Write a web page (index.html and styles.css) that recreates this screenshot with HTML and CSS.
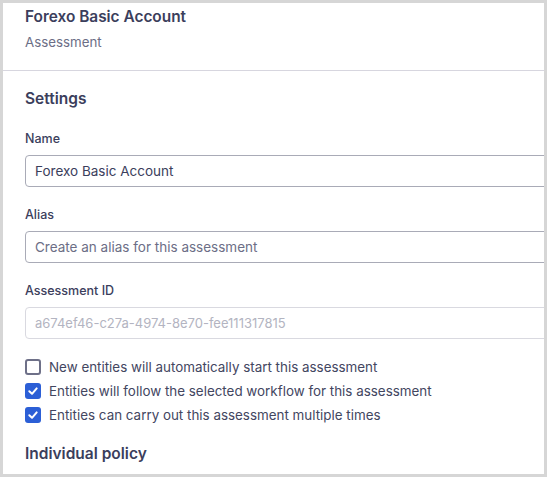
FILE: index.html
```html
<!DOCTYPE html>
<html>
<head>
<meta charset="utf-8">
<link rel="stylesheet" href="styles.css">
</head>
<body>
<div class="frame">
  <header class="head">
    <div class="title">Forexo Basic Account</div>
    <div class="subtitle">Assessment</div>
  </header>
  <section class="content">
    <h2 class="section-title">Settings</h2>
    <div class="field">
      <label class="label">Name</label>
      <div class="input">Forexo Basic Account</div>
    </div>
    <div class="field">
      <label class="label">Alias</label>
      <div class="input placeholder">Create an alias for this assessment</div>
    </div>
    <div class="field">
      <label class="label">Assessment ID</label>
      <div class="input disabled">a674ef46-c27a-4974-8e70-fee111317815</div>
    </div>
    <div class="checks">
      <div class="check-row"><span class="box"></span><span>New entities will automatically start this assessment</span></div>
      <div class="check-row"><span class="box checked"><svg viewBox="0 0 16 16" width="16" height="16"><path d="M4.3 8.3 L7 10.8 L11.7 5.4" fill="none" stroke="#fff" stroke-width="2" stroke-linecap="round" stroke-linejoin="round"/></svg></span><span>Entities will follow the selected workflow for this assessment</span></div>
      <div class="check-row"><span class="box checked"><svg viewBox="0 0 16 16" width="16" height="16"><path d="M4.3 8.3 L7 10.8 L11.7 5.4" fill="none" stroke="#fff" stroke-width="2" stroke-linecap="round" stroke-linejoin="round"/></svg></span><span>Entities can carry out this assessment multiple times</span></div>
    </div>
    <h2 class="section-title policy">Individual policy</h2>
  </section>
</div>
</body>
</html>
```
FILE: styles.css
```css
html, body {
  margin: 0;
  padding: 0;
  background: #d6d6d6;
}
body {
  font-family: Inter, "Noto Sans", sans-serif;
  color: #3b3e5c;
  padding: 3px;
  width: 547px;
  height: 477px;
  box-sizing: border-box;
}
.frame {
  background: #fff;
  width: 541px;
  height: 471px;
  overflow: hidden;
}
.head {
  padding: 4px 0 19px 22px;
  border-bottom: 1px solid #d7d6df;
}
.title {
  font-size: 15.4px;
  font-weight: 600;
  line-height: 20px;
}
.subtitle {
  margin-top: 6px;
  font-size: 13.3px;
  line-height: 18px;
  color: #6c6e86;
}
.content {
  padding: 18px 0 0 22px;
}
.section-title {
  margin: 0;
  font-size: 15.5px;
  font-weight: 600;
  line-height: 20px;
}
.field {
  margin-top: 21px;
}
.field + .field {
  margin-top: 19px;
}
.label {
  display: block;
  font-size: 12.5px;
  font-weight: 500;
  line-height: 18px;
}
.input {
  margin-top: 7px;
  width: 560px;
  height: 32px;
  box-sizing: border-box;
  border: 1px solid #a9abb7;
  border-radius: 4px;
  padding: 0 9px;
  font-size: 13.5px;
  line-height: 30px;
  color: #3b3e5c;
}
.input.placeholder {
  color: #6c6e86;
}
.input.disabled {
  border-color: #d9d9e0;
  color: #b3b4c1;
  font-size: 13px;
}
.checks {
  margin-top: 16px;
}
.check-row {
  display: flex;
  align-items: center;
  gap: 8px;
  height: 24px;
  font-size: 13.4px;
  color: #43465f;
}
.box {
  width: 16px;
  height: 16px;
  box-sizing: border-box;
  border: 2px solid #6e7088;
  border-radius: 3px;
  display: flex;
  align-items: center;
  justify-content: center;
}
.box.checked {
  background: #2c5fd6;
  border: none;
}
.policy {
  margin-top: 17px;
}
```
